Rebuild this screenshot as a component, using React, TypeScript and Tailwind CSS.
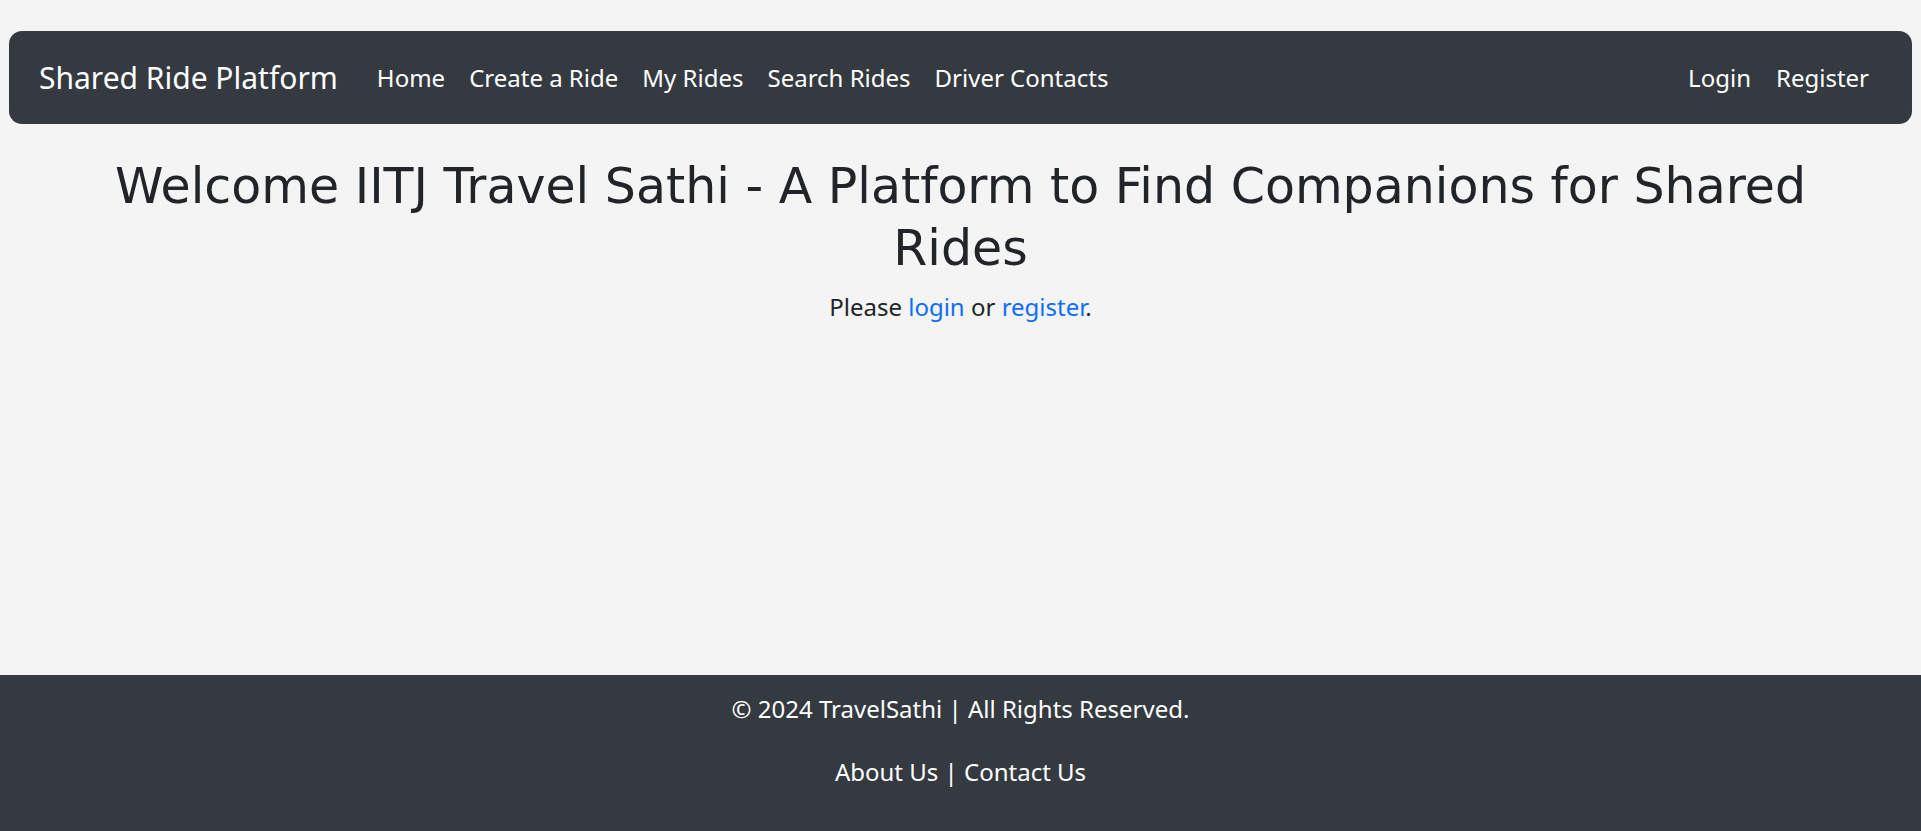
const navLinks = ["Home", "Create a Ride", "My Rides", "Search Rides", "Driver Contacts"];

export default function App() {
  return (
    <div className="min-h-screen flex flex-col bg-[#f4f4f4] text-[#212529] font-['Noto_Sans','Lato',sans-serif]">
      <header className="pt-[31px] px-[9px]">
        <nav className="h-[93px] rounded-[13px] bg-[#343a40] flex items-center pl-[30px] pr-[43px] text-white">
          <a className="text-[30px] leading-none mr-[39px]">Shared Ride Platform</a>
          <ul className="flex items-center gap-[24px] text-[24px]">
            {navLinks.map((l) => (
              <li key={l}>
                <a>{l}</a>
              </li>
            ))}
          </ul>
          <ul className="ml-auto flex items-center gap-[25px] text-[24px]">
            <li>
              <a>Login</a>
            </li>
            <li>
              <a>Register</a>
            </li>
          </ul>
        </nav>
      </header>

      <main className="flex-1 pt-[32px] px-4">
        <div className="max-w-[1760px] mx-auto text-center">
          <h1 className="text-[49px] leading-[62px] font-['Comic_Sans_MS','DejaVu_Sans',sans-serif]">
            Welcome IITJ Travel Sathi - A Platform to Find Companions for Shared Rides
          </h1>
          <p className="mt-[12px] text-[24px] leading-[30px]">
            Please <a className="text-[#0d6efd]">login</a> or{" "}
            <a className="text-[#0d6efd]">register</a>.
          </p>
        </div>
      </main>

      <footer className="bg-[#343a40] text-white text-center text-[24px] leading-[30px] pt-[19px] pb-[44px]">
        <p>© 2024 TravelSathi | All Rights Reserved.</p>
        <p className="mt-[33px]">About Us | Contact Us</p>
      </footer>
    </div>
  );
}
